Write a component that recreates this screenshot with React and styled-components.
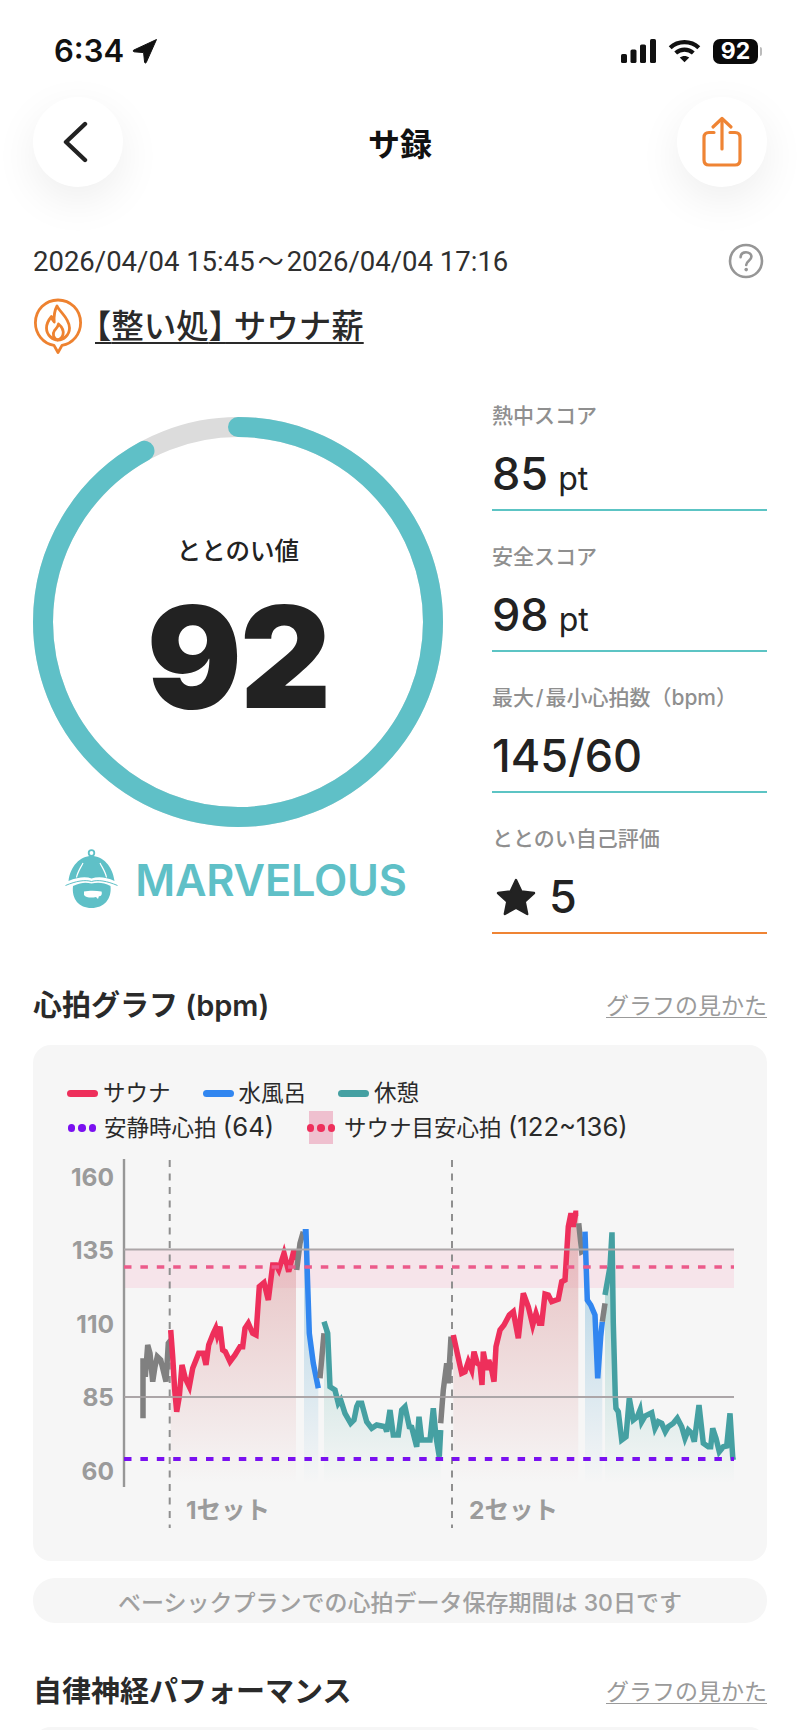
import React from "react";
import styled, { createGlobalStyle } from "styled-components";

const SANS = `"Inter", "Noto Sans CJK JP", sans-serif`;

const Global = createGlobalStyle`
  html, body { margin: 0; padding: 0; background: #fff; }
  body { font-family: ${SANS}; color: #222; overflow: hidden; }
  #root { height: 1730px; overflow: hidden; }
`;

const Page = styled.div`
  width: 800px;
  height: 1730px;
  overflow: hidden;
  background: #fff;
`;

/* status bar */
const StatusBar = styled.div`
  height: 97px;
  box-sizing: border-box;
  padding: 31px 38px 0 54px;
  display: flex;
  justify-content: space-between;
  align-items: flex-start;
`;
const StatusLeft = styled.div`
  display: flex;
  align-items: center;
  gap: 8px;
  height: 40px;
`;
const Clock = styled.span`
  font-size: 31px;
  font-weight: 600;
  line-height: 40px;
  color: #111;
`;
const StatusRight = styled.div`
  display: flex;
  align-items: center;
  height: 40px;
  gap: 12px;
`;
const BatteryWrap = styled.div`
  display: flex;
  align-items: center;
  gap: 2px;
`;
const Battery = styled.div`
  width: 45px;
  height: 25px;
  border-radius: 7px;
  background: #0a0a0a;
  color: #fff;
  font-size: 23px;
  font-weight: 700;
  line-height: 25px;
  text-align: center;
`;
const BatteryNub = styled.div`
  width: 2px;
  height: 9px;
  border-radius: 0 2px 2px 0;
  background: #bbb;
`;

/* nav */
const Nav = styled.div`
  display: flex;
  justify-content: space-between;
  align-items: center;
  padding: 0 33px;
  height: 90px;
`;
const RoundButton = styled.div`
  width: 90px;
  height: 90px;
  border-radius: 50%;
  background: #fff;
  box-shadow: 0 14px 44px rgba(0, 0, 0, 0.07);
  display: flex;
  align-items: center;
  justify-content: center;
`;
const Title = styled.div`
  font-size: 32px;
  font-weight: 700;
  color: #111;
`;

/* session info */
const DateRow = styled.div`
  margin: 54px 33px 0;
  height: 40px;
  display: flex;
  justify-content: space-between;
  align-items: center;
`;
const DateText = styled.span`
  font-family: Roboto, "Noto Sans CJK JP", sans-serif;
  font-size: 27.5px;
  line-height: 40px;
  color: #2f2f2f;
  white-space: nowrap;
`;
const DateTilde = styled.span`
  font-family: "Noto Sans CJK JP", sans-serif;
  font-size: 26px;
  margin: 0 3px;
`;
const HelpSlot = styled.span`
  display: flex;
  margin-right: 3px;
`;
const PlaceRow = styled.div`
  margin: 17px 33px 0;
  height: 55px;
  display: flex;
  align-items: flex-start;
  gap: 12px;
`;
const PlaceName = styled.span`
  margin-top: 7px;
  font-size: 32.5px;
  line-height: 44px;
  font-weight: 500;
  color: #2a2a2a;
  text-decoration: underline;
  text-decoration-thickness: 2px;
  text-underline-offset: 4px;
  white-space: nowrap;
`;
const Bracket = styled.span`
  font-feature-settings: "halt";
`;

/* summary */
const Summary = styled.div`
  margin: 16px 33px 0;
  display: flex;
  justify-content: space-between;
  height: 563px;
`;
const GaugeColumn = styled.div`
  width: 410px;
  padding-top: 48px;
`;
const Gauge = styled.div`
  position: relative;
  width: 410px;
  height: 410px;
`;
const GaugeCenter = styled.div`
  position: absolute;
  inset: 0;
  display: flex;
  flex-direction: column;
  align-items: center;
  padding-top: 117px;
`;
const GaugeLabel = styled.div`
  font-size: 24.5px;
  line-height: 34px;
  font-weight: 500;
  color: #222;
`;
const GaugeValue = styled.div`
  margin-top: 9px;
  font-size: 141px;
  line-height: 160px;
  font-weight: 900;
  letter-spacing: -2px;
  color: #222;
`;
const Rank = styled.div`
  margin-top: 22px;
  display: flex;
  justify-content: center;
  align-items: center;
  gap: 16px;
  padding-right: 4px;
`;
const RankText = styled.span`
  font-size: 43.3px;
  line-height: 60px;
  font-weight: 600;
  color: #5fc0c7;
  letter-spacing: -0.2px;
`;

const Stats = styled.div`
  width: 275px;
  padding-top: 1px;
  display: flex;
  flex-direction: column;
`;
const Stat = styled.div`
  height: 141px;
  flex: none;
  box-sizing: border-box;
  border-bottom: 2px solid ${(p) => p.$line};
  display: flex;
  flex-direction: column;
  justify-content: flex-end;
  padding-bottom: 5px;
`;
const StatLabel = styled.div`
  font-size: 21px;
  line-height: 30px;
  font-weight: 500;
  color: #8f8f8f;
  white-space: nowrap;
`;
const StatValue = styled.div`
  margin-top: 13px;
  height: 60px;
  display: flex;
  align-items: baseline;
  gap: 10px;
  font-size: 45px;
  line-height: 60px;
  font-weight: 500;
  color: #222;
`;
const StatUnit = styled.span`
  font-size: 32px;
  font-weight: 400;
`;
const StarRow = styled(StatValue)`
  align-items: center;
  gap: 13px;
  padding-left: 4px;
`;

/* sections */
const SectionHead = styled.div`
  margin: ${(p) => p.$top}px 33px 0;
  height: 40px;
  display: flex;
  justify-content: space-between;
  align-items: center;
`;
const SectionTitle = styled.h2`
  margin: 0;
  font-size: 29px;
  line-height: 40px;
  font-weight: 600;
  color: #2a2a2a;
  white-space: nowrap;
`;
const SectionLink = styled.a`
  font-size: 23px;
  line-height: 32px;
  color: #9a9a9a;
  text-decoration: underline;
  text-decoration-thickness: 1px;
  text-underline-offset: 3px;
`;
const ChartCard = styled.div`
  margin: 19px 33px 0;
  height: 516px;
  border-radius: 18px;
  background: #f6f6f6;
  padding-top: 31px;
  box-sizing: border-box;
`;
const Legend = styled.div`
  padding-left: 34px;
  display: flex;
  flex-direction: column;
  height: 79px;
`;
const LegendRow = styled.div`
  display: flex;
  align-items: center;
  height: 34.5px;
  flex: none;
  gap: ${(p) => p.$gap}px;
`;
const LegendItem = styled.div`
  display: flex;
  align-items: center;
  gap: ${(p) => p.$gap || 5}px;
  font-size: 22.5px;
  line-height: 34px;
  color: #2a2a2a;
  white-space: nowrap;
`;
const LegendNum = styled.span`
  font-size: 25.7px;
`;
const LegendBar = styled.span`
  width: 31px;
  height: 7px;
  border-radius: 4px;
  background: ${(p) => p.$color};
`;
const LegendDots = styled.span`
  position: relative;
  display: flex;
  gap: 3px;
  width: 30px;
  height: 33px;
  align-items: center;
  justify-content: center;
  &::before {
    content: "";
    display: ${(p) => (p.$band ? "block" : "none")};
    position: absolute;
    top: 0;
    bottom: 0;
    left: 3px;
    right: 3px;
    background: ${(p) => p.$band};
  }
  & > i {
    position: relative;
    width: 7.5px;
    height: 7.5px;
    border-radius: 50%;
    background: ${(p) => p.$color};
    flex: none;
  }
`;
const ChartSvg = styled.svg`
  display: block;
`;
const AxisLabel = styled.text`
  font-family: ${SANS};
  font-size: 24.5px;
  font-weight: 700;
  fill: #9b9b9b;
`;
const Notice = styled.div`
  margin: 17px 33px 0;
  height: 45px;
  border-radius: 22px;
  background: #f6f6f6;
  display: flex;
  align-items: center;
  justify-content: center;
  font-size: 23px;
  font-weight: 500;
  color: #a0a0a0;
  white-space: nowrap;
`;
const LowerCard = styled.div`
  margin: 15px 33px 0;
  height: 100px;
  border-radius: 18px;
  background: #f6f6f6;
`;

/* chart data: traced from crops; each trace is [originX, originY, points at 3x] */
const fromCrop = (ox, oy, pts) => pts.map(([x, y]) => [ox + x / 3, oy + y / 3]);
const CA = (p) => fromCrop(100, 1190, p);
const CB = (p) => fromCrop(350, 1190, p);
const CC = (p) => fromCrop(560, 1190, p);

const gray1 = CA([[129,685],[129,505],[136,560],[143,465],[150,490],[158,575],[165,530],[172,500],[182,510],[198,575],[205,460],[212,450]]);
const red1 = CA([[212,420],[218,500],[224,600],[230,665],[238,620],[246,525],[256,565],[268,590],[278,535],[296,490],[310,490],[318,525],[326,465],[340,430],[347,415],[352,435],[360,410],[368,480],[376,485],[390,515],[405,495],[420,470],[428,470],[435,415],[445,400],[458,430],[468,435],[478,290],[492,278],[505,330],[518,225],[528,225],[536,240],[552,190],[566,245],[582,180],[588,210]]);
const gray2 = CA([[590,240],[600,160],[610,125]]);
const blue1 = CA([[608,125],[618,125],[622,250],[628,430],[640,520],[655,595]]);
const gray3 = CA([[660,565],[672,430]]);
const teal1 = [
  ...CA([[672,395],[683,430],[690,590],[705,600],[715,640],[722,630],[735,670],[752,700],[762,690],[770,650]]),
  ...CB([[25,640],[35,640],[50,695],[65,715],[80,705],[105,710],[110,725],[120,660],[130,735],[145,735],[155,660],[165,650],[178,710],[185,712],[200,770],[207,680],[215,750],[240,750],[250,655],[258,740],[268,800],[272,720]]),
];
const gray4 = CB([[272,700],[280,600],[290,520],[295,580],[303,440]]);
const red2 = CB([[310,435],[322,490],[335,550],[345,545],[355,515],[365,540],[372,485],[382,520],[390,525],[396,585],[400,485],[410,540],[416,510],[425,540],[432,575],[438,470],[450,420],[462,405],[478,375],[490,365],[505,445],[520,310],[535,350],[548,405],[558,370],[568,400],[575,400],[585,312],[595,315],[605,335],[625,328],[635,275],[645,270],[655,110],[663,70],[670,110],[677,70],[685,70]]);
const gray5 = CB([[686,100],[695,185],[705,180]]);
const blue2 = [...CB([[705,125],[712,330],[722,345],[735,375]]), ...CC([[113,565],[122,440],[127,395]])];
const gray6 = CC([[127,395],[135,340]]);
const teal2 = CC([[135,315],[150,230],[156,127],[160,400],[166,620],[168,655],[175,665],[185,750],[198,740],[208,625],[220,690],[232,680],[240,660],[245,695],[255,678],[275,668],[285,715],[295,695],[305,700],[316,725],[325,710],[340,700],[352,685],[365,710],[375,745],[385,720],[395,730],[403,755],[417,645],[430,760],[445,770],[452,770],[458,715],[468,745],[478,785],[490,770],[500,768],[510,670],[518,800],[520,810]]);

const toPoints = (pts) => pts.map(([x, y]) => `${x.toFixed(1)},${y.toFixed(1)}`).join(" ");
const toArea = (pts) => {
  const first = pts[0];
  const last = pts[pts.length - 1];
  return `${toPoints(pts)} ${last[0].toFixed(1)},1482 ${first[0].toFixed(1)},1482`;
};

const Trace = ({ pts, color }) => (
  <polyline points={toPoints(pts)} fill="none" stroke={color} strokeWidth="5.5" strokeLinejoin="miter" strokeMiterlimit="4" />
);

const RED = "#ee2f5b";
const BLUE = "#3186f0";
const TEAL = "#45a0a2";
const GRAY = "#808080";

const HeartChart = () => (
  <ChartSvg width="734" height="391" viewBox="33 1155 734 391">
    <defs>
      <linearGradient id="fillRed" gradientUnits="userSpaceOnUse" x1="0" y1="1220" x2="0" y2="1484">
        <stop offset="0" stopColor="#dc9a9c" stopOpacity="0.62" />
        <stop offset="1" stopColor="#dc9a9c" stopOpacity="0" />
      </linearGradient>
      <linearGradient id="fillBlue" gradientUnits="userSpaceOnUse" x1="0" y1="1300" x2="0" y2="1484">
        <stop offset="0" stopColor="#8cc0dc" stopOpacity="0.5" />
        <stop offset="1" stopColor="#8cc0dc" stopOpacity="0" />
      </linearGradient>
      <linearGradient id="fillTeal" gradientUnits="userSpaceOnUse" x1="0" y1="1280" x2="0" y2="1484">
        <stop offset="0" stopColor="#62b5ad" stopOpacity="0.42" />
        <stop offset="1" stopColor="#62b5ad" stopOpacity="0" />
      </linearGradient>
    </defs>

    {[["160", 1177], ["135", 1250], ["110", 1324], ["85", 1397], ["60", 1471]].map(([t, y]) => (
      <AxisLabel key={t} x="114" y={y + 9} textAnchor="end">{t}</AxisLabel>
    ))}

    <rect x="124" y="1249" width="610" height="39" fill="#f6e4ea" />

    <polygon points={toArea(red1.slice(0, -1).concat([[296, red1[red1.length - 1][1]]]))} fill="url(#fillRed)" />
    <polygon points={toArea(blue1.map(([x, y]) => [Math.max(x, 304), y]))} fill="url(#fillBlue)" />
    <polygon points={toArea(teal1)} fill="url(#fillTeal)" />
    <polygon points={toArea(red2)} fill="url(#fillRed)" />
    <polygon points={toArea(blue2)} fill="url(#fillBlue)" />
    <polygon points={toArea(teal2.concat([[734, 1460]]))} fill="url(#fillTeal)" />

    <line x1="124" y1="1397" x2="734" y2="1397" stroke="#aca6a8" strokeWidth="2" />
    <line x1="124" y1="1159" x2="124" y2="1487" stroke="#979797" strokeWidth="2.4" />

    <line x1="169.7" y1="1160" x2="169.7" y2="1528" stroke="#8f8f8f" strokeWidth="2" strokeDasharray="7 6.5" />
    <line x1="452" y1="1160" x2="452" y2="1528" stroke="#8f8f8f" strokeWidth="2" strokeDasharray="7 6.5" />

    <Trace pts={gray1} color={GRAY} />
    <Trace pts={red1} color={RED} />
    <Trace pts={gray2} color={GRAY} />
    <Trace pts={blue1} color={BLUE} />
    <Trace pts={gray3} color={GRAY} />
    <Trace pts={teal1} color={TEAL} />
    <Trace pts={gray4} color={GRAY} />
    <Trace pts={red2} color={RED} />
    <Trace pts={gray5} color={GRAY} />
    <Trace pts={blue2} color={BLUE} />
    <Trace pts={gray6} color={GRAY} />
    <Trace pts={teal2} color={TEAL} />

    <line x1="124" y1="1249.5" x2="734" y2="1249.5" stroke="#aca6a8" strokeWidth="2" />
    <line x1="124" y1="1397" x2="734" y2="1397" stroke="#aca6a8" strokeOpacity="0.7" strokeWidth="2" />
    <line x1="124" y1="1267" x2="734" y2="1267" stroke="#ec5a8a" strokeWidth="3.5" strokeDasharray="7.5 8.9" />
    <line x1="124" y1="1459" x2="734" y2="1459" stroke="#7a10f0" strokeWidth="4" strokeDasharray="7.5 8.9" />

    <AxisLabel x="186" y="1519">1セット</AxisLabel>
    <AxisLabel x="469" y="1519">2セット</AxisLabel>
  </ChartSvg>
);

const LocationArrow = () => (
  <svg width="26" height="26" viewBox="0 0 26 26">
    <path d="M24.5 1.5 L1.5 12.2 Q0.6 13.2 2 13.8 L11.6 14.6 L12.6 24.4 Q13.2 25.6 14.2 24.6 Z" fill="#111" stroke="#111" strokeWidth="1" strokeLinejoin="round" />
  </svg>
);
const SignalIcon = () => (
  <svg width="35" height="24" viewBox="0 0 35 24">
    <rect x="0" y="15" width="6" height="9" rx="1.6" fill="#111" />
    <rect x="9.5" y="10.5" width="6" height="13.5" rx="1.6" fill="#111" />
    <rect x="19" y="5.5" width="6" height="18.5" rx="1.6" fill="#111" />
    <rect x="29" y="0" width="6" height="24" rx="1.6" fill="#111" />
  </svg>
);
const WifiIcon = () => (
  <svg width="33" height="24" viewBox="0 0 36 26" fill="none" stroke="#111" strokeWidth="4.6">
    <path d="M2.4 9.4 C11 1.2 25 1.2 33.6 9.4" />
    <path d="M8.4 15.2 C14 10.2 22 10.2 27.6 15.2" />
    <path d="M18 25.4 L12.8 20.2 C15.8 17.8 20.2 17.8 23.2 20.2 Z" fill="#111" stroke="none" />
  </svg>
);
const BackIcon = () => (
  <svg width="30" height="44" viewBox="0 0 30 44" fill="none">
    <path d="M22 4 L3 22 L22 40" stroke="#222" strokeWidth="4.4" strokeLinecap="round" strokeLinejoin="round" />
  </svg>
);
const ShareIcon = () => (
  <svg width="42" height="52" viewBox="0 0 42 52" fill="none" stroke="#ef8434" strokeWidth="3.2" strokeLinecap="round" strokeLinejoin="round">
    <path d="M13 16.5 H8 Q3 16.5 3 21.5 V44 Q3 49 8 49 H34 Q39 49 39 44 V21.5 Q39 16.5 34 16.5 H29" />
    <path d="M21 33 V3" />
    <path d="M12 11 L21 2.5 L30 11" />
  </svg>
);
const HelpIcon = () => (
  <svg width="36" height="36" viewBox="0 0 36 36">
    <circle cx="18" cy="18" r="16" fill="none" stroke="#969696" strokeWidth="2.6" />
    <path d="M12.6 14.2 C12.8 10.8 15 9.2 18 9.2 C21 9.2 23.4 11 23.4 13.8 C23.4 17.6 18.2 17.8 18.2 22" fill="none" stroke="#969696" strokeWidth="2.6" strokeLinecap="round" />
    <circle cx="18.2" cy="26.6" r="1.8" fill="#969696" />
  </svg>
);
const PinIcon = () => (
  <svg width="50" height="56" viewBox="0 0 50 56" fill="none" stroke="#ee8230" strokeWidth="2.8" strokeLinejoin="round" strokeLinecap="round">
    <path d="M21 47.4 C10.2 45.6 2.4 36 2.4 24.8 C2.4 12 12.4 2 25 2 C37.6 2 47.6 12 47.6 24.8 C47.6 36 39.8 45.6 29 47.4 L25 54.5 Z" fill="#fff" />
    <path d="M24 8 C26.5 14 36.5 20 36.5 30 C36.5 37 30.5 42 25 42 C19.5 42 13.5 37 13.5 30 C13.5 25.5 16 21.5 18.5 18.5 C19 21.5 20 23 21.2 24 C20.8 18 21.5 12.5 24 8 Z" />
    <path d="M24.5 42 C20.5 40.5 19 36 21.5 32.5 C23 30.5 25 29 25.5 26 C28.5 28.5 31 32 30 36.5 C29.4 39 27.4 41 24.5 42 Z" />
  </svg>
);
const Mascot = () => (
  <svg width="54" height="61" viewBox="7 5 54 61">
    <circle cx="33.5" cy="9" r="2.8" fill="none" stroke="#5fc0c7" strokeWidth="1.8" />
    <path d="M33.5 12 C22 12 12.5 22 10.5 37 C20 33 28 32.5 33.5 34.5 C40 32.5 48 33 56.5 37 C54.5 22 45 12 33.5 12 Z" fill="#5fc0c7" />
    <path d="M25 19 C22.5 24 19.5 28 18.5 33.5 M42 19 C44.5 24 47.5 28 48.5 33.5" fill="none" stroke="#fff" strokeWidth="1.2" />
    <path d="M7.5 41.5 C18 37 27 35.5 33.5 37.5 C40 35.5 49 37 59.5 41.5" fill="none" stroke="#5fc0c7" strokeWidth="1" />
    <path d="M15 42 C24 38 28 38.5 33.5 39.5 C40 38 46 38.5 52.5 42 C54 55 46 64 33.5 64 C21 64 13.5 55 15 42 Z" fill="#5fc0c7" />
    <path d="M26 47.5 C31 46.5 38 46.5 43.5 47.5 C44.5 50 43 53 41 52 L40 55 L38 53 C34 54 28 54 26 51 Z" fill="#fff" />
  </svg>
);
const Star = () => (
  <svg width="40" height="38" viewBox="0 0 40 38">
    <path d="M20 2 L25.4 13.4 L38 15 L28.7 23.6 L31.2 36 L20 29.8 L8.8 36 L11.3 23.6 L2 15 L14.6 13.4 Z" fill="#222" stroke="#222" strokeWidth="2.4" strokeLinejoin="round" />
  </svg>
);

const GaugeRing = () => (
  <svg width="410" height="410" viewBox="0 0 410 410">
    <circle cx="205" cy="205" r="195" fill="none" stroke="#dcdcdc" strokeWidth="20" />
    <circle
      cx="205" cy="205" r="195" fill="none" stroke="#5fc0c7" strokeWidth="20" strokeLinecap="round"
      strokeDasharray={`${2 * Math.PI * 195 * 0.92} ${2 * Math.PI * 195}`}
      transform="rotate(-90 205 205)"
    />
  </svg>
);

const STATS = [
  { label: "熱中スコア", value: "85", unit: "pt" },
  { label: "安全スコア", value: "98", unit: "pt" },
  { label: "最大\u200a/\u200a最小心拍数（bpm）", value: "145/60" },
];

export default function App() {
  return (
    <Page>
      <Global />
      <StatusBar>
        <StatusLeft>
          <Clock>6:34</Clock>
          <LocationArrow />
        </StatusLeft>
        <StatusRight>
          <SignalIcon />
          <WifiIcon />
          <BatteryWrap>
            <Battery>92</Battery>
            <BatteryNub />
          </BatteryWrap>
        </StatusRight>
      </StatusBar>

      <Nav>
        <RoundButton><BackIcon /></RoundButton>
        <Title>サ録</Title>
        <RoundButton><ShareIcon /></RoundButton>
      </Nav>

      <DateRow>
        <DateText>2026/04/04 15:45<DateTilde>～</DateTilde>2026/04/04 17:16</DateText>
        <HelpSlot><HelpIcon /></HelpSlot>
      </DateRow>
      <PlaceRow>
        <PinIcon />
        <PlaceName><Bracket>【</Bracket>整い処<Bracket>】</Bracket> サウナ薪</PlaceName>
      </PlaceRow>

      <Summary>
        <GaugeColumn>
          <Gauge>
            <GaugeRing />
            <GaugeCenter>
              <GaugeLabel>ととのい値</GaugeLabel>
              <GaugeValue>92</GaugeValue>
            </GaugeCenter>
          </Gauge>
          <Rank>
            <Mascot />
            <RankText>MARVELOUS</RankText>
          </Rank>
        </GaugeColumn>
        <Stats>
          {STATS.map((s) => (
            <Stat key={s.value} $line="#5cc4c4">
              <StatLabel>{s.label}</StatLabel>
              <StatValue>
                {s.value}
                {s.unit && <StatUnit>{s.unit}</StatUnit>}
              </StatValue>
            </Stat>
          ))}
          <Stat $line="#ef8434">
            <StatLabel>ととのい自己評価</StatLabel>
            <StarRow><Star />5</StarRow>
          </Stat>
        </Stats>
      </Summary>

      <SectionHead $top={54}>
        <SectionTitle>心拍グラフ (bpm)</SectionTitle>
        <SectionLink>グラフの見かた</SectionLink>
      </SectionHead>
      <ChartCard>
        <Legend>
          <LegendRow $gap={32}>
            <LegendItem><LegendBar $color={RED} />サウナ</LegendItem>
            <LegendItem><LegendBar $color={BLUE} />水風呂</LegendItem>
            <LegendItem><LegendBar $color={TEAL} />休憩</LegendItem>
          </LegendRow>
          <LegendRow $gap={32}>
            <LegendItem $gap={7}><LegendDots $color="#7a10f0"><i /><i /><i /></LegendDots><span>安静時心拍 <LegendNum>(64)</LegendNum></span></LegendItem>
            <LegendItem $gap={8}><LegendDots $color={RED} $band="#efc0cf"><i /><i /><i /></LegendDots><span>サウナ目安心拍 <LegendNum>(122~136)</LegendNum></span></LegendItem>
          </LegendRow>
        </Legend>
        <HeartChart />
      </ChartCard>
      <Notice>ベーシックプランでの心拍データ保存期間は 30日です</Notice>

      <SectionHead $top={49}>
        <SectionTitle>自律神経パフォーマンス</SectionTitle>
        <SectionLink>グラフの見かた</SectionLink>
      </SectionHead>
      <LowerCard />
    </Page>
  );
}
